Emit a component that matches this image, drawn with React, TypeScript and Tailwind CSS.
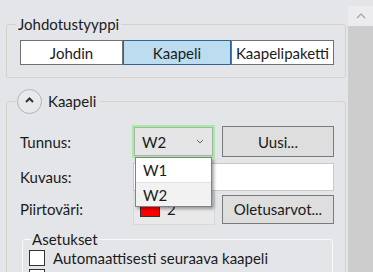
import React from "react";

function Chevron({ className }: { className?: string }) {
  return (
    <svg width="8" height="5" viewBox="0 0 8 5" className={className}>
      <polyline points="1,1 4,4 7,1" fill="none" stroke="#666" strokeWidth="1" />
    </svg>
  );
}

export default function App() {
  return (
    <div className="w-[373px] h-[272px] flex bg-[#e4e5e9] overflow-hidden font-[Lato,sans-serif] text-[15px] leading-[20px] text-[#1b1b1b]">
      <div className="flex-1 pl-[6px] pr-[2px]">
        <fieldset className="mt-[14px] border border-[#d3d3cb] rounded-[3px] pl-[9px] pt-[6px] pb-[12px]">
          <legend className="px-[2px] leading-[20px]">Johdotustyyppi</legend>
          <div className="ml-[4px] flex h-[25px]">
            <div className="w-[103px] border border-[#707070] bg-white flex items-center justify-center">Johdin</div>
            <div className="w-[108px] border border-[#2f6496] bg-[#bcdcef] flex items-center justify-center">Kaapeli</div>
            <div className="w-[103px] border border-[#707070] bg-white flex items-center justify-center">Kaapelipaketti</div>
          </div>
        </fieldset>

        <fieldset className="mt-[10px] border border-[#d3d3cb] rounded-[3px] pl-[9px] pt-[11px] pb-[12px]">
          <legend className="px-[1px] flex items-center h-[26px]">
            <div className="w-[25px] h-[25px] rounded-full border-[1.5px] border-[#b4b4b4] bg-[#e8e9ec] flex items-center justify-center">
              <svg width="9" height="6" viewBox="0 0 9 6" className="-mt-[2px]">
                <polyline points="1,5 4.5,1.5 8,5" fill="none" stroke="#333" strokeWidth="2" />
              </svg>
            </div>
            <span className="ml-[6px] pr-[3px]">Kaapeli</span>
          </legend>
          <div className="ml-[4px]">
            <div className="flex items-center h-[33px]">
              <div className="w-[112px]">Tunnus:</div>
              <div className="relative w-[83px] h-[33px] border-2 border-[#a0f0a0]">
                <div className="w-full h-full border border-[#b0b0b0] bg-[#e5e5e5] flex items-center pl-[7px] pr-[8px]">
                  <span className="flex-1">W2</span>
                  <Chevron />
                </div>
                <div className="absolute left-[1px] top-[30px] w-[77px] h-[50px] bg-white border border-[#828282] shadow-[2px_2px_3px_rgba(0,0,0,0.35)] z-10 flex flex-col">
                  <div className="h-[25px] flex items-center pl-[7px]">W1</div>
                  <div className="h-[24px] flex items-center pl-[7px] bg-[#f2f2f2] border-t border-[#e2e2e2]">W2</div>
                </div>
              </div>
              <button className="ml-[7px] w-[112px] h-[31px] border border-[#7a7a7a] bg-[#dedede] flex items-center justify-center">Uusi...</button>
            </div>

            <div className="flex items-center h-[28px] mt-[5px]">
              <div className="w-[113px]">Kuvaus:</div>
              <div className="w-[201px] h-[28px] bg-white border border-[#c9c9c9]" />
            </div>

            <div className="flex items-center h-[32px] mt-[2px]">
              <div className="w-[113px]">Piirtoväri:</div>
              <div className="w-[82px] h-[32px] bg-[#e9e9ea] border border-[#d9d9d9] flex items-center pl-[6px]">
                <div className="w-[20px] h-[15px] bg-[#f00] border border-[#333]" />
                <span className="ml-[7px]">2</span>
              </div>
              <button className="ml-[7px] w-[112px] h-[29px] border border-[#7a7a7a] bg-[#dedede] flex items-center justify-center">Oletusarvot...</button>
            </div>

            <fieldset className="mt-[4px] ml-[2px] w-[311px] border border-[#fafafa] rounded-[3px] pl-[8px] pt-[1px] pb-[6px]">
              <legend className="px-[1px]">Asetukset</legend>
              <div className="-ml-[2px] flex items-center h-[16px]">
                <div className="w-[16px] h-[16px] bg-white border border-[#333]" />
                <span className="ml-[8px]">Automaattisesti seuraava kaapeli</span>
              </div>
              <div className="-ml-[2px] mt-[3px] flex items-center h-[16px]">
                <div className="w-[16px] h-[16px] bg-white border border-[#333]" />
              </div>
            </fieldset>
          </div>
        </fieldset>
      </div>
      <div className="w-[25px] flex flex-col pt-[6px]">
        <div className="h-[20px] bg-[#ececee] flex items-center justify-center">
          <svg width="10" height="6" viewBox="0 0 10 6">
            <polyline points="1,5 5,1 9,5" fill="none" stroke="#a3a3a3" strokeWidth="1.2" />
          </svg>
        </div>
        <div className="flex-1 bg-[#cdcdcd]" />
      </div>
    </div>
  );
}
